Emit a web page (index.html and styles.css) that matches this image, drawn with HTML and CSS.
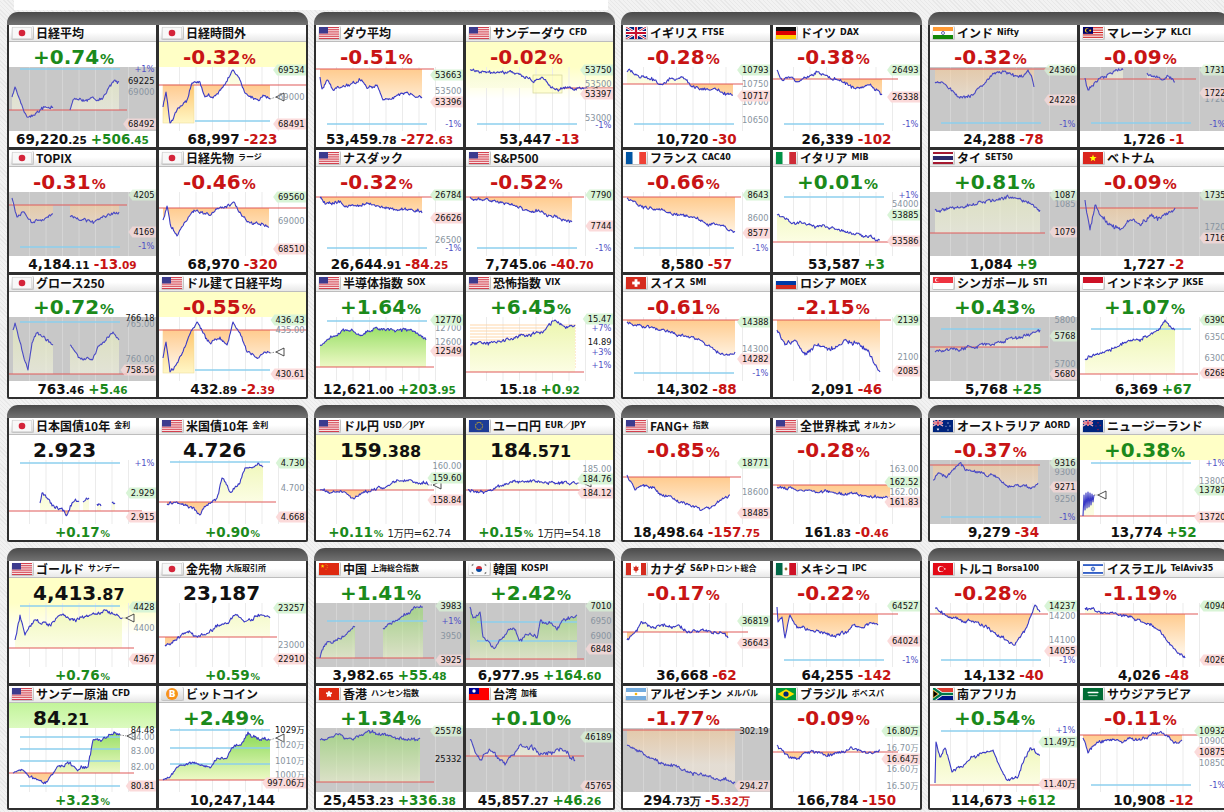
FILE: index.html
```html
<!DOCTYPE html>
<html lang="ja">
<head>
<meta charset="utf-8">
<title>世界の株価と日経平均先物</title>
<link rel="stylesheet" href="styles.css">
</head>
<body>
<div class="topbar"></div>
<main class="page" id="page"></main>
<script src="script.js"></script>
</body>
</html>
```

FILE: styles.css
```css
html, body { margin: 0; padding: 0; height: 812px; overflow: hidden; }
body {
  background: repeating-linear-gradient(45deg, #e8e8e8 0, #e8e8e8 1px, #f2f2f2 1px, #f2f2f2 3px);
  font-family: "DejaVu Sans", "Noto Sans CJK JP", sans-serif;
}
.topbar { margin-left: 14px; width: 594px; height: 10px; background: #fff; }
.page { display: flex; flex-direction: column; gap: 6px; padding: 2px 0 0 7px; width: 1240px; }
.grow { display: flex; gap: 6px; }
.grp {
  flex: 0 0 301px; box-sizing: border-box; padding: 13px 2px 2px;
  background: linear-gradient(#4a4a4a 0, #727272 13px, #2f2f2f 13px, #2f2f2f 100%);
  border-radius: 11px 11px 2px 2px;
  display: grid; grid-template-columns: 147px 147px; gap: 3px; align-content: start;
}
.cell { height: 122px; background: #fff; display: flex; flex-direction: column; overflow: hidden; }
.ttl {
  height: 17px; box-sizing: border-box; display: flex; align-items: center; padding-left: 2px;
  background: linear-gradient(#fff 0, #fff 45%, #e8e8e8 100%);
  border-bottom: 1px solid #bdbdbd; white-space: nowrap; overflow: hidden;
}
.fb {
  width: 23px; height: 14px; box-sizing: border-box; padding: 1px; margin-right: 2px; flex: 0 0 auto;
  background: linear-gradient(#fdfdfd, #d9d9d9);
  border-right: 1px solid #c4c4c4; border-bottom: 1px solid #c4c4c4; border-radius: 2px;
}
.fb svg { display: block; }
.nm { font: 700 12px/1 "Noto Sans CJK JP", sans-serif; color: #111; }
.sub { font: 700 8px/1 "DejaVu Sans", "Noto Sans CJK JP", sans-serif; color: #111; margin-left: 4px; }
.top {
  height: 25px; box-sizing: border-box; padding: 4px 0 0 24px;
  display: flex; align-items: center; white-space: nowrap;
}
.top.y { background: #ffffc6; }
.top.g { background: linear-gradient(#c2f49a, #dcfac0); }
.pct { font: 700 20px/1 "DejaVu Sans", sans-serif; }
.pct small { font-size: 14px; margin-left: 1px; }
.val { font: 700 20px/1 "DejaVu Sans", sans-serif; color: #111; }
.val small { font-size: 16px; }
.up { color: #1b8a1b; }
.dn { color: #c81414; }
.chart { height: 64px; flex: 0 0 64px; }
.chart.gy { background: #c8c8c8; }
.chart.yf { background: linear-gradient(#ffffc6, #ffffff 50%); }
.cv { display: block; overflow: visible; }
.lb { font: 8.3px "DejaVu Sans", "Noto Sans CJK JP", sans-serif; }
.bot { height: 16px; line-height: 11px; text-align: center; white-space: nowrap; }
.num { font: 700 13.5px "DejaVu Sans", sans-serif; color: #111; }
.num small, .chg small { font-size: 10.5px; }
.chg { font: 700 13.5px "DejaVu Sans", sans-serif; margin-left: 4px; }
.bp { font: 700 13.5px "DejaVu Sans", sans-serif; }
.bp small { font-size: 9.5px; margin-left: 1px; }
.note { font: 10px "DejaVu Sans", "Noto Sans CJK JP", sans-serif; color: #222; margin-left: 4px; }
```

FILE: script.js
```js
const P = v => `<span class="pct ${v[0] === '+' ? 'up' : 'dn'}">${v}<small>%</small></span>`;
const N = (a, b = '') => `<span class="num">${a}<small>${b}</small></span>`;
const C = (a, b = '') => `<span class="chg ${a[0] === '+' ? 'up' : 'dn'}">${a}<small>${b}</small></span>`;
const V = (a, b = '') => `<span class="val">${a}<small>${b}</small></span>`;
const Q = (v, n = '') => `<span class="bp up">${v}<small>%</small></span>${n ? `<span class="note">${n}</span>` : ''}`;

function stripes(n, cols) {
  let s = '';
  const h = 12 / n;
  for (let i = 0; i < n; i++) s += `<rect y="${(i * h).toFixed(2)}" width="20" height="${(h + 0.05).toFixed(2)}" fill="${cols[i % cols.length]}"/>`;
  return s;
}
function star(cx, cy, r, col) {
  let p = [];
  for (let i = 0; i < 10; i++) {
    const a = -Math.PI / 2 + i * Math.PI / 5, rr = i % 2 ? r * 0.42 : r;
    p.push((cx + rr * Math.cos(a)).toFixed(2) + ',' + (cy + rr * Math.sin(a)).toFixed(2));
  }
  return `<polygon points="${p.join(' ')}" fill="${col}"/>`;
}
const UJ = (w, h) => `<g transform="scale(${w / 20},${h / 12})"><rect width="20" height="12" fill="#00247d"/><path d="M0 0L20 12M20 0L0 12" stroke="#fff" stroke-width="2.6"/><path d="M0 0L20 12M20 0L0 12" stroke="#c8102e" stroke-width=".9"/><path d="M10 0V12M0 6H20" stroke="#fff" stroke-width="3.8"/><path d="M10 0V12M0 6H20" stroke="#c8102e" stroke-width="2.2"/></g>`;

const FL = {
  jp: '<rect x=".3" y=".3" width="19.4" height="11.4" fill="#f8f8f8" stroke="#cfcfcf" stroke-width=".6"/><circle cx="10" cy="6" r="3.3" fill="#d4243a"/>',
  us: '<rect width="20" height="12" fill="#fff"/>' + [0, 2, 4, 6, 8, 10, 12].map(i => `<rect y="${(i * 12 / 13).toFixed(2)}" width="20" height="${(12 / 13).toFixed(2)}" fill="#d0303f"/>`).join('') + '<rect width="9" height="6.46" fill="#3c3b8e"/>',
  gb: UJ(20, 12),
  de: stripes(3, ['#111', '#dd0000', '#ffce00']),
  in: stripes(3, ['#ff9933', '#ffffff', '#138808']) + '<circle cx="10" cy="6" r="1.5" fill="none" stroke="#000080" stroke-width=".6"/>',
  my: stripes(14, ['#cc0001', '#ffffff']) + '<rect width="10" height="6.86" fill="#010066"/><circle cx="4" cy="3.4" r="2.1" fill="#fc0"/><circle cx="4.7" cy="3.4" r="1.7" fill="#010066"/><circle cx="7.2" cy="3.4" r="1" fill="#fc0"/>',
  fr: '<rect width="6.7" height="12" fill="#0055a4"/><rect x="6.7" width="6.6" height="12" fill="#fff"/><rect x="13.3" width="6.7" height="12" fill="#ef4135"/>',
  it: '<rect width="6.7" height="12" fill="#009246"/><rect x="6.7" width="6.6" height="12" fill="#fff"/><rect x="13.3" width="6.7" height="12" fill="#ce2b37"/>',
  th: stripes(6, ['#a51931', '#ffffff', '#2d2a6a', '#2d2a6a', '#ffffff', '#a51931']),
  vn: '<rect width="20" height="12" fill="#da251d"/>' + star(10, 6.2, 3.8, '#ffff00'),
  ch: '<rect width="20" height="12" fill="#d52b1e"/><rect x="8.6" y="2.2" width="2.8" height="7.6" fill="#fff"/><rect x="6.2" y="4.6" width="7.6" height="2.8" fill="#fff"/>',
  ru: stripes(3, ['#ffffff', '#0039a6', '#d52b1e']),
  sg: '<rect width="20" height="6" fill="#ef3340"/><rect y="6" width="20" height="6" fill="#fff"/><circle cx="4" cy="3" r="2" fill="#fff"/><circle cx="4.8" cy="3" r="1.8" fill="#ef3340"/>',
  id: '<rect width="20" height="6" fill="#ce1126"/><rect y="6" width="20" height="6" fill="#fff"/>',
  au: '<rect width="20" height="12" fill="#00247d"/>' + UJ(10, 6) + star(5, 9.3, 1.5, '#fff') + star(15, 3, 0.9, '#fff') + star(17, 6, 0.9, '#fff') + star(15, 10, 0.9, '#fff') + star(13, 6.2, 0.8, '#fff'),
  nz: '<rect width="20" height="12" fill="#00247d"/>' + UJ(10, 6) + star(15, 2.8, 1, '#cc142b') + star(17.2, 5.5, 1, '#cc142b') + star(15, 9.6, 1.1, '#cc142b') + star(13, 6, 0.9, '#cc142b'),
  eu: '<rect width="20" height="12" fill="#1e3c96"/>' + Array.from({ length: 12 }, (_, k) => `<circle cx="${(10 + 3.6 * Math.cos(k * Math.PI / 6)).toFixed(2)}" cy="${(6 + 3.6 * Math.sin(k * Math.PI / 6)).toFixed(2)}" r=".55" fill="#fc0"/>`).join(''),
  cn: '<rect width="20" height="12" fill="#de2910"/>' + star(3.6, 3.2, 2, '#ffde00') + star(7, 1.3, 0.6, '#ffde00') + star(8.2, 2.8, 0.6, '#ffde00') + star(8.2, 4.8, 0.6, '#ffde00') + star(7, 6.2, 0.6, '#ffde00'),
  kr: '<rect width="20" height="12" fill="#fafafa"/><path d="M7 6A3 3 0 0 1 13 6Z" fill="#cd2e3a"/><path d="M7 6A3 3 0 0 0 13 6Z" fill="#0047a0"/><path d="M2.5 2.2L4.2 1M2.9 2.9L4.6 1.7M15.8 1L17.5 2.2M15.4 1.7L17.1 2.9M2.5 9.8L4.2 11M2.9 9.1L4.6 10.3M15.8 11L17.5 9.8M15.4 10.3L17.1 9.1" stroke="#222" stroke-width=".5"/>',
  hk: '<rect width="20" height="12" fill="#de2910"/>' + Array.from({ length: 5 }, (_, k) => `<ellipse cx="10" cy="4.4" rx="1" ry="1.7" fill="#fff" transform="rotate(${k * 72} 10 6)"/>`).join(''),
  tw: '<rect width="20" height="12" fill="#fe0000"/><rect width="10" height="6" fill="#000095"/><circle cx="5" cy="3" r="1.7" fill="#fff"/>',
  ca: '<rect width="20" height="12" fill="#fff"/><rect width="5" height="12" fill="#d52b1e"/><rect x="15" width="5" height="12" fill="#d52b1e"/><path d="M10 2.2L11 4.2L12.6 3.6L12 6.4L13.4 6.2L10.3 8.6V10H9.7V8.6L6.6 6.2L8 6.4L7.4 3.6L9 4.2Z" fill="#d52b1e"/>',
  mx: '<rect width="6.7" height="12" fill="#006847"/><rect x="6.7" width="6.6" height="12" fill="#fff"/><rect x="13.3" width="6.7" height="12" fill="#ce1126"/><circle cx="10" cy="6" r="1.4" fill="#8c6a2a"/>',
  tr: '<rect width="20" height="12" fill="#e30a17"/><circle cx="7.8" cy="6" r="3.1" fill="#fff"/><circle cx="8.6" cy="6" r="2.5" fill="#e30a17"/>' + star(11.8, 6, 1.2, '#fff'),
  il: '<rect width="20" height="12" fill="#fff"/><rect y="1.3" width="20" height="1.5" fill="#0038b8"/><rect y="9.2" width="20" height="1.5" fill="#0038b8"/><path d="M10 3.7L12 7.1H8ZM10 8.3L8 4.9H12Z" fill="none" stroke="#0038b8" stroke-width=".55"/>',
  ar: stripes(3, ['#74acdf', '#ffffff', '#74acdf']) + '<circle cx="10" cy="6" r="1.3" fill="#f6b40e"/>',
  br: '<rect width="20" height="12" fill="#009c3b"/><path d="M10 1.2L18.4 6L10 10.8L1.6 6Z" fill="#ffdf00"/><circle cx="10" cy="6" r="2.6" fill="#002776"/>',
  za: '<rect width="20" height="6" fill="#e03c31"/><rect y="6" width="20" height="6" fill="#001489"/><path d="M0 0L8.5 6L0 12M8.5 6H20" stroke="#fff" stroke-width="4" fill="none"/><path d="M0 0L8.5 6L0 12M8.5 6H20" stroke="#007749" stroke-width="2.4" fill="none"/><path d="M0 2.2L5.2 6L0 9.8Z" fill="#000" stroke="#ffb612" stroke-width=".7"/>',
  sa: '<rect width="20" height="12" fill="#006c35"/><rect x="4.5" y="3.8" width="11" height="1.4" rx=".6" fill="#fff"/><rect x="5.5" y="7.4" width="9" height=".7" fill="#fff"/>',
  btc: '<rect width="20" height="12" fill="none"/><circle cx="10" cy="6" r="6" fill="#f7931a"/><text x="10.2" y="9.2" font-size="9" font-weight="700" text-anchor="middle" fill="#fff" font-family="DejaVu Sans">B</text>'
};

const ROWS = [
  [
    [
      { f: 'jp', n: '日経平均', top: P('+0.74'), bot: N('69,220', '.25') + C('+506', '.45'), g: 1, pv: 43, l1: [[2]],
        pts: [[3, 30], [6, 20], [11, 33], [18, 50], [24, 48], [31, 43], [44, 40], null, [61, 43], [64, 33], [84, 30], [94, 31], [101, 18], [106, 13], [110, 15]],
        lab: [['69000', 25, 'a'], ['+1%', 2, 'p'], ['69225', 14, 'k'], ['68492', 57, 'l']] },
      { f: 'jp', n: '日経時間外', top: P('-0.32'), bot: N('68,997') + C('-223'), hl: 'y', pv: 18, pr: [0, 147], l1: [[54, 36, 111]], box: [4, 18, 31, 38],
        pts: [[4, 40], [7, 25], [11, 56], [18, 43], [28, 33], [33, 16], [41, 15], [46, 30], [54, 31], [64, 20], [74, 3], [81, 13], [86, 26], [99, 33], [104, 28], [111, 32]], arr: [117, 30],
        lab: [['69000', 30, 'a'], ['69534', 3, 'h'], ['68491', 57, 'l']] },
      { f: 'jp', n: 'TOPIX', top: P('-0.31'), bot: N('4,184', '.11') + C('-13', '.09'), g: 1, pv: 13, l1: [[55]],
        pts: [[3, 6], [8, 25], [14, 20], [22, 30], [35, 28], [44, 22], null, [61, 24], [70, 28], [85, 30], [100, 22], [110, 20]],
        lab: [['4205', 3, 'h'], ['4169', 40, 'l'], ['-1%', 54, 'm']] },
      { f: 'jp', n: '日経先物', s: 'ラージ', top: P('-0.46'), bot: N('68,970') + C('-320'), pv: 16, pr: [0, 147],
        pts: [[4, 28], [8, 14], [12, 35], [18, 44], [26, 30], [35, 18], [45, 22], [55, 20], [65, 16], [75, 10], [82, 22], [90, 30], [100, 32], [110, 35]],
        lab: [['69000', 29, 'a'], ['69560', 5, 'h'], ['68510', 57, 'l']] },
      { f: 'jp', n: 'グロース250', top: P('+0.72'), bot: N('763', '.46') + C('+5', '.46'), g: 1, pv: 57, l1: [[5]],
        pts: [[4, 13], [6, 6], [11, 25], [19, 53], [23, 26], [28, 16], [34, 20], [44, 28], null, [61, 28], [71, 41], [83, 43], [91, 28], [104, 15], [110, 23]],
        lab: [['765.00', 7, 'a'], ['760.00', 42, 'a'], ['766.18', 1, 'k'], ['758.56', 53, 'l']] },
      { f: 'us', n: 'ドル建て日経平均', top: P('-0.55'), bot: N('432', '.89') + C('-2', '.39'), hl: 'y', pv: 13, pr: [0, 147], l1: [[53, 36, 111]], box: [4, 13, 31, 43],
        pts: [[4, 41], [7, 25], [11, 55], [18, 46], [26, 30], [33, 13], [38, 5], [44, 16], [51, 26], [61, 20], [68, 28], [74, 5], [81, 16], [88, 35], [99, 41], [106, 35], [111, 36]], arr: [117, 35],
        lab: [['435.00', 13, 'a'], ['436.43', 3, 'h'], ['430.61', 57, 'l']] }
    ],
    [
      { f: 'us', n: 'ダウ平均', top: P('-0.51'), bot: N('53,459', '.78') + C('-272', '.63'), pv: 2, l1: [[57]],
        pts: [[4, 10], [6, 22], [11, 13], [17, 23], [24, 21], [34, 18], [44, 13], [52, 21], [61, 18], [67, 33], [81, 28], [91, 25], [99, 30], [106, 30]],
        lab: [['53500', 24, 'a'], ['53663', 8, 'h'], ['53396', 35, 'l'], ['-1%', 57, 'm']] },
      { f: 'us', n: 'サンデーダウ', s: 'CFD', top: P('-0.02'), bot: N('53,447') + C('-13'), hl: 'y', yf: 1, pv: 21, pr: [97, 147], l1: [[57]], bx2: [67, 8, 29, 18],
        pts: [[4, 3], [21, 5], [34, 5], [47, 6], [61, 10], [67, 15], [77, 11], [87, 21], [101, 21], [121, 21]], arr: [123, 24],
        lab: [['53500', 17, 'a'], ['53000', 51, 'a'], ['-1%', 58, 'm'], ['53750', 3, 'h'], ['53397', 27, 'l']] },
      { f: 'us', n: 'ナスダック', top: P('-0.32'), bot: N('26,644', '.91') + C('-84', '.25'), pv: 5, l1: [[56]],
        pts: [[4, 6], [10, 12], [20, 10], [35, 13], [50, 12], [65, 15], [80, 18], [95, 17], [106, 21]],
        lab: [['26500', 48, 'a'], ['26784', 3, 'h'], ['26626', 26, 'l'], ['-1%', 56, 'm']] },
      { f: 'us', n: 'S&P500', top: P('-0.52'), bot: N('7,745', '.06') + C('-40', '.70'), pv: 5, l1: [[56]],
        pts: [[4, 5], [15, 8], [30, 10], [45, 13], [60, 18], [75, 20], [90, 25], [106, 30]],
        lab: [['7790', 3, 'h'], ['7744', 34, 'l'], ['-1%', 56, 'm']] },
      { f: 'us', n: '半導体指数', s: 'SOX', top: P('+1.64'), bot: N('12,621', '.00') + C('+203', '.95'), pv: 50, l1: [[4]], gc: 1,
        pts: [[4, 28], [14, 21], [29, 13], [44, 18], [59, 11], [79, 15], [94, 13], [104, 18], [110, 23]],
        lab: [['12700', 11, 'a'], ['12600', 25, 'a'], ['12770', 3, 'h'], ['12549', 34, 'l']] },
      { f: 'us', n: '恐怖指数', s: 'VIX', top: P('+6.45'), bot: N('15', '.18') + C('+0', '.92'), pv: 55, st: 1,
        pts: [[4, 28], [24, 26], [44, 23], [64, 18], [79, 13], [89, 3], [99, 10], [109, 8]],
        lab: [['15.47', 2, 'h'], ['+7%', 11, 'p'], ['14.89', 25, 'k'], ['+3%', 35, 'p'], ['+1%', 48, 'p']] }
    ],
    [
      { f: 'gb', n: 'イギリス', s: 'FTSE', top: P('-0.28'), bot: N('10,720') + C('-30'), pv: 17, pr: [0, 120], l1: [[57]],
        pts: [[4, 5], [7, 3], [12, 8], [22, 10], [32, 13], [42, 16], [49, 11], [60, 10], [69, 20], [79, 23], [92, 21], [99, 25], [105, 26], [110, 28]],
        lab: [['10750', 17, 'a'], ['10700', 35, 'a'], ['10650', 53, 'a'], ['10793', 3, 'h'], ['10717', 29, 'l']] },
      { f: 'de', n: 'ドイツ', s: 'DAX', top: P('-0.38'), bot: N('26,339') + C('-102'), pv: 12, pr: [0, 125], l1: [[57]],
        pts: [[4, 3], [9, 13], [15, 10], [24, 15], [32, 11], [44, 5], [52, 8], [65, 13], [75, 18], [85, 21], [95, 18], [105, 23], [109, 28]],
        lab: [['26493', 3, 'h'], ['26338', 30, 'l'], ['-1%', 57, 'm']] },
      { f: 'fr', n: 'フランス', s: 'CAC40', top: P('-0.66'), bot: N('8,580') + C('-57'), pv: 5, l1: [[56]],
        pts: [[4, 6], [17, 13], [37, 18], [57, 23], [77, 28], [97, 33], [107, 38], [112, 40]],
        lab: [['8600', 26, 'a'], ['8643', 3, 'h'], ['8577', 41, 'l'], ['-1%', 56, 'm']] },
      { f: 'it', n: 'イタリア', s: 'MIB', top: P('+0.01'), bot: N('53,587') + C('+3'), pv: 50, l1: [[5]],
        pts: [[4, 23], [17, 30], [37, 33], [57, 36], [77, 40], [97, 44], [107, 48]],
        lab: [['+1%', 3, 'p'], ['54000', 12, 'a'], ['53885', 23, 'h'], ['53586', 49, 'l']] },
      { f: 'ch', n: 'スイス', s: 'SMI', top: P('-0.61'), bot: N('14,302') + C('-88'), pv: 3, l1: [[56]],
        pts: [[4, 5], [17, 8], [37, 13], [57, 18], [77, 23], [92, 33], [102, 38], [112, 35]],
        lab: [['14300', 32, 'a'], ['14388', 5, 'h'], ['14282', 42, 'l'], ['-1%', 56, 'm']] },
      { f: 'ru', n: 'ロシア', s: 'MOEX', top: P('-2.15'), bot: N('2,091') + C('-46'), pv: 3, amp: 2.8,
        pts: [[4, 13], [12, 28], [22, 23], [32, 38], [42, 28], [57, 33], [72, 23], [87, 28], [102, 48], [107, 55]],
        lab: [['2100', 40, 'a'], ['2139', 3, 'h'], ['2085', 54, 'l']] }
    ],
    [
      { f: 'in', n: 'インド', s: 'Nifty', top: P('-0.32'), bot: N('24,288') + C('-78'), g: 1, pv: 2, pr: [0, 122], l1: [[56]],
        pts: [[5, 16], [12, 15], [18, 21], [28, 30], [35, 31], [45, 26], [55, 16], [62, 8], [72, 5], [82, 8], [92, 10], [98, 3], [102, 11], [104, 20]],
        lab: [['24360', 3, 'h'], ['24228', 33, 'l'], ['-1%', 57, 'm']] },
      { f: 'my', n: 'マレーシア', s: 'KLCI', top: P('-0.09'), bot: N('1,726') + C('-1'), g: 1, pv: 12, pr: [0, 116], l1: [[56]],
        pts: [[5, 11], [8, 23], [15, 15], [22, 10], [28, 7], [35, 4], [43, 3], null, [67, 6], [75, 10], [82, 13], [88, 9], [95, 15]],
        lab: [['1720', 32, 'a'], ['1731', 3, 'h'], ['1722', 26, 'l'], ['-1%', 57, 'm']] },
      { f: 'th', n: 'タイ', s: 'SET50', top: P('+0.81'), bot: N('1,084') + C('+9'), g: 1, pv: 41, pr: [0, 115],
        pts: [[5, 18], [20, 15], [40, 13], [60, 8], [80, 6], [100, 11], [110, 18]],
        lab: [['1085', 12, 'a'], ['1087', 3, 'h'], ['1079', 40, 'l']] },
      { f: 'vn', n: 'ベトナム', top: P('-0.09'), bot: N('1,727') + C('-2'), g: 1, pv: 16, pr: [0, 118], amp: 2.8,
        pts: [[5, 8], [10, 38], [15, 13], [20, 23], [30, 33], [40, 38], [50, 28], [60, 33], [70, 23], [80, 26], [90, 20], [95, 16]],
        lab: [['1720', 35, 'a'], ['1735', 3, 'h'], ['1716', 46, 'l']] },
      { f: 'sg', n: 'シンガポール', s: 'STI', top: P('+0.43'), bot: N('5,768') + C('+25'), g: 1, pv: 30, l1: [[12]],
        pts: [[5, 35], [30, 33], [60, 28], [80, 21], [100, 18], [110, 13]],
        lab: [['5800', 3, 'a'], ['5700', 47, 'a'], ['5768', 19, 'h'], ['5680', 57, 'l']] },
      { f: 'id', n: 'インドネシア', s: 'JKSE', top: P('+1.07'), bot: N('6,369') + C('+67'), pv: 57, l1: [[12]],
        pts: [[5, 43], [15, 38], [30, 33], [40, 28], [55, 23], [70, 18], [85, 3], [95, 13]],
        lab: [['6350', 20, 'a'], ['6300', 41, 'a'], ['6390', 3, 'h'], ['6268', 56, 'l']] }
    ]
  ],
  [
    [
      { f: 'jp', n: '日本国債10年', s: '金利', top: V('2.923'), bot: Q('+0.17'), pv: 51, pr: [0, 133], l1: [[3]],
        pts: [[31, 43], [33, 33], [38, 38], [44, 45], [53, 48], [58, 55], [63, 43], [70, 41], null, [74, 42], [80, 38], null, [88, 44], [92, 46], null, [103, 43], [106, 43]],
        lab: [['+1%', 3, 'p'], ['2.929', 33, 'h'], ['2.915', 57, 'l']] },
      { f: 'us', n: '米国債10年', s: '金利', top: V('4.726'), bot: Q('+0.90'), pv: 42, pr: [0, 117], l1: [[2]],
        pts: [[8, 45], [18, 42], [28, 45], [41, 55], [48, 45], [58, 38], [63, 18], [71, 32], [81, 23], [86, 8], [94, 7], [99, 3], [104, 7]],
        lab: [['4.700', 28, 'a'], ['4.730', 3, 'h'], ['4.668', 57, 'l']] }
    ],
    [
      { f: 'us', n: 'ドル円', s: 'USD／JPY', top: V('159', '.388'), bot: Q('+0.11', '1万円=62.74'), hl: 'y', pv: 30,
        pts: [[4, 30], [14, 33], [27, 32], [39, 38], [47, 33], [61, 28], [74, 25], [91, 20], [99, 22], [109, 23], [112, 25]], arr: [117, 25],
        lab: [['160.00', 6, 'a'], ['159.60', 18, 'h'], ['158.84', 40, 'l']] },
      { f: 'eu', n: 'ユーロ円', s: 'EUR／JPY', top: V('184', '.571'), bot: Q('+0.15', '1万円=54.18'), hl: 'y', pv: 30,
        pts: [[2, 30], [14, 32], [27, 30], [41, 24], [54, 22], [67, 20], [84, 22], [101, 23], [112, 23]], arr: [117, 23],
        lab: [['185.00', 9, 'a'], ['184.76', 19, 'h'], ['184.12', 33, 'l']] }
    ],
    [
      { f: 'us', n: 'FANG+', s: '指数', top: P('-0.85'), bot: N('18,498', '.64') + C('-157', '.75'), pv: 17,
        pts: [[4, 15], [12, 30], [22, 25], [37, 35], [52, 40], [67, 45], [87, 48], [97, 40], [107, 35]],
        lab: [['18600', 32, 'a'], ['18771', 3, 'h'], ['18485', 53, 'l']] },
      { f: 'us', n: '全世界株式', s: 'オルカン', top: P('-0.28'), bot: N('161', '.83') + C('-0', '.46'), pv: 25,
        pts: [[4, 28], [27, 30], [57, 32], [87, 35], [107, 37], [117, 38]],
        lab: [['163.00', 9, 'a'], ['162.00', 32, 'a'], ['162.52', 22, 'h'], ['161.83', 42, 'l']] }
    ],
    [
      { f: 'au', n: 'オーストラリア', s: 'AORD', top: P('-0.37'), bot: N('9,279') + C('-34'), g: 1, pv: 5, pr: [0, 110], l1: [[57]],
        pts: [[3, 20], [10, 13], [17, 17], [23, 10], [30, 3], [35, 10], [47, 13], [60, 15], [70, 20], [80, 27], [93, 25], [103, 27], [108, 23]],
        lab: [['9300', 12, 'a'], ['9250', 39, 'a'], ['9316', 3, 'h'], ['9271', 27, 'l'], ['-1%', 57, 'm']] },
      { f: 'nz', n: 'ニュージーランド', top: P('+0.38'), bot: N('13,774') + C('+52'), hl: 'y', pv: 56, pr: [0, 147], l1: [[3]], amp: 0,
        pts: [[3, 56], [4, 35], [5, 50], [6, 33], [7, 48], [8, 32], [9, 47], [10, 33], [11, 45], [12, 34], [13, 42], [14, 35]], arr: [18, 35],
        lab: [['13800', 21, 'a'], ['+1%', 3, 'p'], ['13787', 30, 'h'], ['13720', 57, 'l']] }
    ]
  ],
  [
    [
      { f: 'us', n: 'ゴールド', s: 'サンデー', top: V('4,413', '.87'), bot: Q('+0.76'), hl: 'y', yf: 1, pv: 45, pr: [0, 125], l1: [[3]],
        pts: [[6, 37], [11, 12], [16, 32], [26, 17], [41, 22], [51, 12], [66, 17], [81, 12], [96, 7], [106, 12], [113, 15]], arr: [117, 15],
        lab: [['4400', 25, 'a'], ['4428', 4, 'h'], ['4367', 56, 'l']] },
      { f: 'jp', n: '金先物', s: '大阪取引所', top: V('23,187'), bot: Q('+0.59'), pv: 34,
        pts: [[6, 42], [16, 37], [31, 29], [46, 32], [61, 22], [76, 12], [91, 17], [101, 12], [111, 15]],
        lab: [['23000', 42, 'a'], ['23257', 5, 'h'], ['22910', 56, 'l']] },
      { f: 'us', n: 'サンデー原油', s: 'CFD', top: V('84', '.21'), bot: Q('+3.23'), hl: 'g', pv: 45, pr: [0, 125], l1: [[9], [21], [33], [58]], gc: 1,
        pts: [[4, 45], [14, 42], [21, 49], [38, 54], [48, 39], [58, 35], [68, 42], [79, 39], [84, 12], [91, 12], [98, 9], [106, 5], [111, 7]], arr: [118, 8],
        lab: [['84.00', 9, 'a'], ['83.00', 23, 'a'], ['82.00', 39, 'a'], ['84.48', 2, 'k'], ['80.81', 58, 'l']] },
      { f: 'btc', n: 'ビットコイン', top: P('+2.49'), bot: N('10,247,144'), pv: 52, pr: [0, 147], l1: [[2], [20], [36]], gc: 1,
        pts: [[4, 52], [11, 49], [18, 39], [31, 34], [41, 37], [51, 40], [58, 30], [68, 30], [74, 20], [81, 17], [89, 4], [94, 9], [104, 10], [111, 12]], arr: [117, 10],
        lab: [['1020万', 17, 'a'], ['1010万', 33, 'a'], ['1000万', 47, 'a'], ['1029万', 2, 'k'], ['997.06万', 55, 'l']] }
    ],
    [
      { f: 'cn', n: '中国', s: '上海総合指数', top: P('+1.41'), bot: N('3,982', '.65') + C('+55', '.48'), g: 1, pv: 55, l1: [[18]], gc: 1,
        pts: [[4, 55], [6, 47], [11, 39], [17, 40], [27, 34], [39, 24], null, [67, 25], [74, 20], [84, 15], [94, 10], [102, 4], [107, 4]],
        lab: [['3950', 33, 'a'], ['3983', 3, 'h'], ['+1%', 18, 'p'], ['3925', 57, 'l']] },
      { f: 'kr', n: '韓国', s: 'KOSPI', top: P('+2.42'), bot: N('6,977', '.95') + C('+164', '.60'), g: 1, pv: 56, l1: [[19], [38]], amp: 2.4, gc: 1,
        pts: [[4, 4], [7, 15], [14, 9], [17, 34], [24, 40], [29, 45], [37, 34], [47, 25], [54, 37], [64, 30], [71, 35], [74, 19], [84, 20], [91, 27], [97, 17], [104, 15], [111, 12]],
        lab: [['6950', 18, 'a'], ['6900', 33, 'a'], ['7010', 3, 'h'], ['6848', 46, 'l']] },
      { f: 'hk', n: '香港', s: 'ハンセン指数', top: P('+1.34'), bot: N('25,453', '.23') + C('+336', '.38'), g: 1, pv: 54, gc: 1,
        pts: [[4, 12], [19, 7], [34, 10], [49, 5], [64, 7], [79, 9], [94, 12], [104, 10]],
        lab: [['25578', 3, 'h'], ['25332', 31, 'k']] },
      { f: 'tw', n: '台湾', s: '加権', top: P('+0.10'), bot: N('45,857', '.27') + C('+46', '.26'), g: 1, pv: 28, amp: 2.8,
        pts: [[4, 12], [14, 32], [24, 22], [39, 37], [54, 17], [74, 27], [94, 20], [109, 32]],
        lab: [['46189', 9, 'h'], ['45765', 58, 'l']] }
    ],
    [
      { f: 'ca', n: 'カナダ', s: 'S&Pトロント総合', top: P('-0.17'), bot: N('36,668') + C('-62'), pv: 29, pr: [0, 125],
        pts: [[4, 37], [9, 32], [19, 19], [29, 24], [42, 22], [55, 22], [65, 29], [79, 27], [92, 29], [102, 30], [105, 35]],
        lab: [['36819', 18, 'h'], ['36643', 40, 'l']] },
      { f: 'mx', n: 'メキシコ', s: 'IPC', top: P('-0.22'), bot: N('64,255') + C('-142'), pv: 11, pr: [0, 125], l1: [[57]],
        pts: [[4, 4], [5, 19], [9, 14], [12, 35], [17, 12], [24, 25], [35, 27], [49, 29], [65, 32], [75, 29], [80, 22], [89, 25], [99, 20], [105, 22]],
        lab: [['64527', 3, 'h'], ['64024', 38, 'l'], ['-1%', 57, 'm']] },
      { f: 'ar', n: 'アルゼンチン', s: 'メルバル', top: P('-1.77'), bot: N('294', '.73万') + C('-5', '.32万'), g: 1, pv: 2,
        pts: [[4, 17], [20, 25], [40, 35], [60, 42], [80, 48], [100, 52], [112, 55]],
        lab: [['302.19', 3, 'k'], ['294.27', 58, 'l']] },
      { f: 'br', n: 'ブラジル', s: 'ボベスパ', top: P('-0.09'), bot: N('166,784') + C('-150'), pv: 24, pr: [0, 125],
        pts: [[4, 17], [17, 30], [37, 24], [57, 27], [77, 20], [97, 24], [107, 22]],
        lab: [['16.70万', 20, 'a'], ['16.60万', 41, 'a'], ['16.50万', 58, 'a'], ['16.80万', 3, 'h'], ['16.64万', 31, 'l']] }
    ],
    [
      { f: 'tr', n: 'トルコ', s: 'Borsa100', top: P('-0.28'), bot: N('14,132') + C('-40'), pv: 11, l1: [[57]],
        pts: [[5, 5], [15, 12], [30, 17], [45, 19], [60, 27], [75, 37], [85, 42], [95, 27], [105, 2], [110, 9]],
        lab: [['14200', 13, 'a'], ['14100', 37, 'a'], ['14237', 3, 'h'], ['14055', 48, 'l'], ['-1%', 57, 'm']] },
      { f: 'il', n: 'イスラエル', s: 'TelAviv35', top: P('-1.19'), bot: N('4,026') + C('-48'), pv: 11,
        pts: [[5, 5], [20, 9], [40, 12], [60, 17], [80, 27], [90, 42], [100, 52], [105, 55]],
        lab: [['4094', 3, 'h'], ['4026', 57, 'l']] },
      { f: 'za', n: '南アフリカ', top: P('+0.54'), bot: N('114,673') + C('+612'), pv: 57, pr: [0, 147], l1: [[3]],
        pts: [[5, 55], [6, 14], [10, 29], [15, 20], [22, 44], [32, 39], [42, 29], [52, 25], [63, 22], [70, 39], [77, 52], [88, 49], [95, 29], [100, 20], [110, 27]],
        lab: [['+1%', 2, 'p'], ['11.49万', 14, 'h'], ['11.40万', 56, 'l']] },
      { f: 'sa', n: 'サウジアラビア', top: P('-0.11'), bot: N('10,908') + C('-12'), pv: 7, pr: [0, 147], l1: [[57]],
        pts: [[3, 10], [8, 25], [17, 14], [28, 12], [42, 15], [55, 12], [68, 9], [80, 4], [88, 9], [98, 15], [102, 12]],
        lab: [['10900', 13, 'a'], ['10850', 35, 'a'], ['10932', 3, 'h'], ['10875', 24, 'l'], ['-1%', 57, 'm']] }
    ]
  ]
];

function rng(s) {
  return function () {
    s |= 0; s = s + 0x6D2B79F5 | 0;
    let t = Math.imul(s ^ s >>> 15, 1 | s);
    t = t + Math.imul(t ^ t >>> 7, 61 | t) ^ t;
    return ((t ^ t >>> 14) >>> 0) / 4294967296;
  };
}

function segs(pts, amp, r) {
  const list = []; let s = [];
  pts.forEach(p => { if (p === null) { if (s.length) list.push(s); s = []; } else s.push(p); });
  if (s.length) list.push(s);
  return list.map(k => {
    if (k.length === 1) return [k[0]];
    const o = [];
    for (let j = 0; j < k.length - 1; j++) {
      const [x0, y0] = k[j], [x1, y1] = k[j + 1];
      const n = Math.max(1, Math.round((x1 - x0) / 0.85));
      const w = [0];
      for (let q = 1; q <= n; q++) w.push(w[q - 1] + (r() - 0.5) * amp);
      for (let q = j ? 1 : 0; q <= n; q++) {
        const t = q / n;
        let y = y0 + (y1 - y0) * t + (w[q] - w[n] * t) + (q > 0 && q < n ? (r() - 0.5) * amp * 1.1 : 0);
        y = Math.max(0.5, Math.min(63.5, y));
        o.push([x0 + (x1 - x0) * t, y]);
      }
    }
    return o;
  });
}

function tw(t) {
  let w = 0;
  for (const ch of t) {
    if (/[0-9]/.test(ch)) w += 5.28;
    else if (ch === '.' || ch === ',') w += 2.64;
    else if (ch === '万') w += 8.3;
    else if (ch === '%') w += 7.9;
    else w += 5.2;
  }
  return w;
}

const F = v => (+v).toFixed(1);

function chart(c, i) {
  const r = rng(i * 7919 + 17), pv = c.pv, amp = c.amp ?? 2.0;
  const S = segs(c.pts, amp, r);
  const up = c.gc ? ['#8fdc5c', '#eef9c6'] : ['#eef7b6', '#fcfde4'];
  const op = c.g ? 0.5 : 1;
  let h = `<svg class="cv" width="147" height="64" viewBox="0 0 147 64"><defs>
<linearGradient id="gu${i}" gradientUnits="userSpaceOnUse" x1="0" y1="${pv - 45}" x2="0" y2="${pv}"><stop offset="0" stop-color="${up[0]}"/><stop offset="1" stop-color="${up[1]}"/></linearGradient>
<linearGradient id="gd${i}" gradientUnits="userSpaceOnUse" x1="0" y1="${pv}" x2="0" y2="${pv + 35}"><stop offset="0" stop-color="#ffcb8e"/><stop offset="1" stop-color="#fff1de"/></linearGradient>
<linearGradient id="gb${i}" x1="0" y1="0" x2="0" y2="1"><stop offset="0" stop-color="#ffc56e"/><stop offset="1" stop-color="#fff7c6"/></linearGradient>
<clipPath id="ca${i}"><rect width="147" height="${pv}"/></clipPath>
<clipPath id="cb${i}"><rect y="${pv}" width="147" height="${64 - pv}"/></clipPath></defs>`;
  const gcol = c.g ? '#d5d5d5' : '#ebebeb';
  for (let k = 1; k <= 7; k++) { const x = F(4 + 16.5 * k); h += `<line x1="${x}" y1="0" x2="${x}" y2="64" stroke="${gcol}" stroke-width="1"/>`; }
  if (c.st) { for (let y = 8; y <= 52; y += 3) h += `<line x1="4" y1="${y}" x2="110" y2="${y}" stroke="#ffd3a0" stroke-width=".9"/>`; }
  if (c.box) { const [x, y, w, hh] = c.box; h += `<rect x="${x}" y="${y}" width="${w}" height="${hh}" fill="url(#gb${i})" stroke="#eedc9c" stroke-width=".6"/>`; }
  S.forEach(seg => {
    if (seg.length < 2) return;
    const d = `M${F(seg[0][0])} ${pv}` + seg.map(p => `L${F(p[0])} ${F(p[1])}`).join('') + `L${F(seg[seg.length - 1][0])} ${pv}Z`;
    h += `<path d="${d}" fill="url(#gu${i})" opacity="${op}" clip-path="url(#ca${i})"/>`;
    h += `<path d="${d}" fill="url(#gd${i})" opacity="${op}" clip-path="url(#cb${i})"/>`;
  });
  if (c.bx2) { const [x, y, w, hh] = c.bx2; h += `<rect x="${x}" y="${y}" width="${w}" height="${hh}" fill="#ffffb8" fill-opacity=".55" stroke="#d4d49a" stroke-width=".7"/>`; }
  const pr = c.pr || [0, 118];
  h += `<line x1="${pr[0]}" y1="${pv}" x2="${pr[1]}" y2="${pv}" stroke="#e05a5a" stroke-width="1.2"/>`;
  (c.l1 || []).forEach(l => { h += `<line x1="${l[1] ?? 11}" y1="${l[0]}" x2="${l[2] ?? 111}" y2="${l[0]}" stroke="#8ccfee" stroke-width="1.3"/>`; });
  const lc = c.g ? '#4a4ac4' : '#3a3ac6';
  S.forEach(seg => {
    if (seg.length < 2) return;
    h += `<path d="M${seg.map(p => F(p[0]) + ' ' + F(p[1])).join('L')}" fill="none" stroke="${lc}" stroke-width="1.1" stroke-linejoin="round"/>`;
  });
  if (c.arr) {
    const last = S[S.length - 1], lp = last[last.length - 1], [ax, ay] = c.arr;
    h += `<line x1="${F(lp[0])}" y1="${F(lp[1])}" x2="${ax}" y2="${ay}" stroke="#555" stroke-width=".7" stroke-dasharray="1.4 1.2"/>`;
    h += `<path d="M${ax} ${ay}L${ax + 8} ${ay - 4}L${ax + 8} ${ay + 4}Z" fill="#fff" fill-opacity=".6" stroke="#222" stroke-width=".8"/>`;
  }
  (c.lab || []).forEach(([t, y, k]) => {
    const w = tw(t);
    if (k === 'h' || k === 'l') {
      const x0 = 145.5 - w - 5;
      h += `<path d="M147 ${y - 5.5}H${F(x0 + 4)}L${F(x0)} ${y}L${F(x0 + 4)} ${y + 5.5}H147Z" fill="${k === 'h' ? '#d8f4d6' : '#fbdada'}" opacity="${c.g ? 0.7 : 1}"/>`;
    }
    const col = k === 'a' ? '#8894a0' : (k === 'p' || k === 'm') ? '#4f4fc4' : '#111';
    h += `<text class="lb" x="145.5" y="${y + 3}" text-anchor="end" fill="${col}">${t}</text>`;
  });
  return h + '</svg>';
}

function cell(c, i) {
  const d = document.createElement('div');
  d.className = 'cell';
  d.innerHTML = `<div class="ttl"><span class="fb"><svg width="20" height="12" viewBox="0 0 20 12">${FL[c.f]}</svg></span><span class="nm">${c.n}</span>${c.s ? `<span class="sub">${c.s}</span>` : ''}</div>` +
    `<div class="top${c.hl ? ' ' + c.hl : ''}">${c.top}</div>` +
    `<div class="chart${c.g ? ' gy' : ''}${c.yf ? ' yf' : ''}">${chart(c, i)}</div>` +
    `<div class="bot">${c.bot}</div>`;
  return d;
}

const page = document.getElementById('page');
let idx = 0;
ROWS.forEach(row => {
  const gr = document.createElement('div');
  gr.className = 'grow';
  row.forEach(group => {
    const g = document.createElement('section');
    g.className = 'grp';
    group.forEach(c => g.appendChild(cell(c, idx++)));
    gr.appendChild(g);
  });
  page.appendChild(gr);
});
```
